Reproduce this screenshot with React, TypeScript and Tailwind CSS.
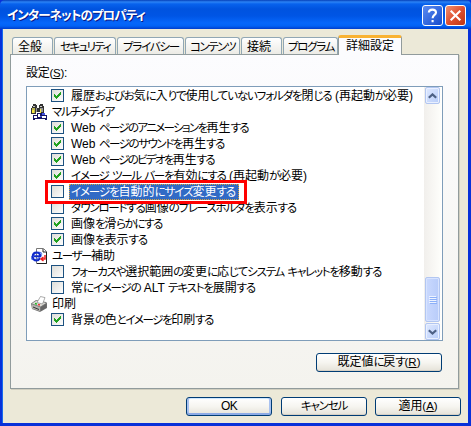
import { useLayoutEffect, useRef, type ReactNode } from "react";

const KANA = /([\u3040-\u30ff]+)/;

/** Sets text to a given width by tightening the kana only, as MS UI Gothic does. */
function Fit({ text, w, hot, kanaClass = "text-[11.5px]", className = "" }: { text: string; w: number; hot?: string; kanaClass?: string; className?: string }) {
  const ref = useRef<HTMLSpanElement>(null);
  useLayoutEffect(() => {
    const el = ref.current;
    if (!el) return;
    const kana = Array.from(el.querySelectorAll<HTMLElement>("[data-kana]"));
    const targets = kana.length ? kana : [el];
    targets.forEach((k) => (k.style.letterSpacing = "0px"));
    const count = targets.reduce((n, k) => n + (k.textContent || "").length, 0);
    const gap = (w - el.getBoundingClientRect().width) / count;
    targets.forEach((k) => (k.style.letterSpacing = gap + "px"));
  }, [text, w]);
  return (
    <span ref={ref} className={"inline-block whitespace-pre [font-feature-settings:'palt'] " + className}>
      {text.split(KANA).map((run, i) =>
        KANA.test(run) ? (
          <span key={i} data-kana="" className={kanaClass}>{run}</span>
        ) : (
          <span key={i}>{run}</span>
        ),
      )}
      {hot && <span className="text-[11.5px]">(<u className="underline-offset-1">{hot}</u>)</span>}
    </span>
  );
}

function Tab({ text, w, className }: { text: string; w: number; className: string }) {
  return (
    <div className={"h-[17px] shrink-0 rounded-t-[3px] border border-b-0 border-[#91a7b4] bg-linear-to-b from-white to-[#ecebe5] leading-[19px] " + className}>
      <Fit text={text} w={w} />
    </div>
  );
}

function Check({ on }: { on?: boolean }) {
  return (
    <svg width="13" height="13" viewBox="0 0 13 13" shapeRendering="crispEdges" className="mt-px shrink-0 self-start">
      <defs>
        <linearGradient id="boxFill" x1="0" y1="0" x2="1" y2="1">
          <stop offset="0" stopColor="#dcdcd7" />
          <stop offset="1" stopColor="#ffffff" />
        </linearGradient>
      </defs>
      <rect x=".5" y=".5" width="12" height="12" fill="url(#boxFill)" stroke="#1c5180" />
      {on && <path d="M3 5h1v1h1v1h1v-1h1v-1h1v-1h1v-1h1v3h-1v1h-1v1h-1v1h-1v1h-1v-1h-1v-1h-1z" fill="#21a121" />}
    </svg>
  );
}

function Item({ text, w, on }: { text: string; w: number; on?: boolean }) {
  return (
    <div className="flex h-4 items-center pl-6 leading-4">
      <Check on={on} />
      <Fit text={text} w={w} className="ml-[7px]" />
    </div>
  );
}

function Group({ text, w, children }: { text: string; w: number; children: ReactNode }) {
  return (
    <div className="flex h-4 items-center pl-1 leading-4">
      <svg width="16" height="16" viewBox="0 0 16 16" className="mr-[5px] shrink-0">{children}</svg>
      <Fit text={text} w={w} />
    </div>
  );
}

function Button({ text, w, hot, primary, className }: { text: string; w: number; hot?: string; primary?: boolean; className: string }) {
  return (
    <button
      className={
        "flex h-[19px] items-center justify-center rounded-[3px] border border-[#003c74] bg-linear-to-b from-white via-[#f6f5f0] to-[#e5e2d8] leading-[17px] " +
        (primary ? "shadow-[inset_0_-2px_0_#8caae6,inset_2px_0_0_#a9c2f0,inset_-2px_0_0_#a9c2f0,inset_0_1px_0_#cee7ff] " : "shadow-[inset_0_-1px_0_#d6d0c5] ") +
        className
      }
    >
      <Fit text={text} w={w} hot={hot} />
    </button>
  );
}

function ScrollArrow({ down }: { down?: boolean }) {
  return (
    <div className="flex h-[17px] w-[15px] shrink-0 items-center justify-center rounded-[2px] border border-[#b2c6f1] bg-linear-to-br from-[#dfe9ff] to-[#b8cdf9] shadow-[inset_0_0_0_1px_#e9f0ff]">
      <svg width="9" height="6" viewBox="0 0 9 6">
        <path d={down ? "M.8 1.2 4.5 4.5 8.2 1.2" : "M.8 4.8 4.5 1.4 8.2 4.8"} fill="none" stroke="#4d6185" strokeWidth="2.2" />
      </svg>
    </div>
  );
}

export default function App() {
  return (
    <div className="flex h-[426px] w-[471px] flex-col overflow-hidden bg-[#0831d9] text-[12px] text-black [font-family:'Liberation_Sans','Noto_Sans_CJK_JP',sans-serif]">
      <header className="flex h-[29px] shrink-0 items-center rounded-t-[5px] bg-[linear-gradient(#0540b8_0,#2b83f5_2px,#0762ed_4px,#0053df_9px,#0055e5_16px,#0667fb_23px,#0262f5_26px,#003dcc_29px)] pr-[5px] pl-[7px] text-white">
        <Fit text="インターネットのプロパティ" w={138} kanaClass="text-[12.5px]" className="mt-[3px] font-bold leading-[18px] [text-shadow:1px_1px_#0a1883]" />
        <div className="ml-auto flex gap-[2px] pt-[2px]">
          <div className="flex size-[21px] items-center justify-center rounded-[3px] border border-white bg-linear-to-br from-[#5b8bf2] to-[#164bcc]">
            <svg width="13" height="15" viewBox="0 0 13 15" fill="none" stroke="white" strokeWidth="2.1">
              <path d="M2.8 4.5C3 1.9 5 1.6 6.5 1.6c2.2 0 3.5 1.1 3.5 2.8 0 2.5-3.4 2.6-3.4 5.8M6.6 12v2.2" />
            </svg>
          </div>
          <div className="flex size-[21px] items-center justify-center rounded-[3px] border border-white bg-linear-to-br from-[#f0906f] via-[#df5030] to-[#bf3511]">
            <svg width="13" height="13" viewBox="0 0 13 13" stroke="white" strokeWidth="2.1">
              <path d="m1.7 1.7 9.6 9.6M11.3 1.7l-9.6 9.6" />
            </svg>
          </div>
        </div>
      </header>

      <div className="mr-[3px] mb-[3px] ml-[3px] flex h-[394px] flex-col bg-[#ece9d8] pt-[6px] shadow-[-1px_0_0_#166aee]">
        <nav className="z-10 -mb-px flex h-5 items-end pl-[9px]">
          <Tab text="全般" w={24} className="mb-px w-[41px] pl-[5px]" />
          <Tab text="セキュリティ" w={50} className="mb-px ml-px w-[62px] pl-[5px]" />
          <Tab text="プライバシー" w={56} className="mb-px ml-px w-[67px] pl-[5px]" />
          <Tab text="コンテンツ" w={45} className="mb-px ml-px w-[55px] pl-1" />
          <Tab text="接続" w={24} className="mb-px ml-px w-[41px] pl-[5px]" />
          <Tab text="プログラム" w={46} className="mb-px ml-px w-[55px] pl-1" />
          <div className="h-5 w-[64px] rounded-t-[3px] border border-t-[3px] border-b-0 border-[#919b9c] border-t-[#f9b233] bg-[#fcfcfe] pl-[7px] leading-[16px]">
            <Fit text="詳細設定" w={48} />
          </div>
        </nav>

        <main className="ml-[7px] h-[335px] w-[449px] shrink-0 border border-[#919b9c] bg-linear-to-b from-[#fcfcfe] to-[#f4f3ee] pl-[15px] shadow-[1px_1px_0_#d0cebf]">
          <div className="flex h-[31px] items-center pt-[5px] leading-4">
            <Fit text="設定" w={38} hot="S" />:
          </div>
          <div className="flex h-[255px] w-[417px] border border-[#7f9db9] bg-white">
            <div className="w-[397px] shrink-0 pt-px">
              <Item on text="履歴およびお気に入りで使用していないフォルダを閉じる (再起動が必要)" w={342} />
              <Group text="マルチメディア" w={62}>
                <g shapeRendering="crispEdges">
                  <path d="M2 0h3v1h1v3h2V1h1V0h3v2h1v8h-3V8H5v2H0V4h1V2h1z" fill="#333" />
                  <path d="M2 2h2v1H2zM9 2h2v1H9z" fill="#ccc" />
                  <path d="M1 4h3v5H1z" fill="#b9b44e" />
                  <path d="M1 6h2v3H1z" fill="#f5e741" />
                  <path d="M5 4h1v4H5zM9 4h3v4H9z" fill="#999" />
                  <path d="M9 5h1v4H9z" fill="#f5e741" />
                  <path d="M2 11h14v5H2zM6 9h8v3H6z" fill="#141464" />
                  <path d="M3 12h3v2H3zM7 10h2v3H7zM11 12h4v2h-4zM4 15h10v1H4z" fill="#fff" />
                  <path d="M9 12h2v1H9zM11 9h3v2h-3z" fill="#4354e0" />
                </g>
              </Group>
              <Item on text="Web ページのアニメーションを再生する" w={177} />
              <Item on text="Web ページのサウンドを再生する" w={153} />
              <Item on text="Web ページのビデオを再生する" w={143} />
              <Item on text="イメージ ツール バーを有効にする (再起動が必要)" w={236} />
              <div className="relative flex h-4 items-center pl-6 leading-4">
                <Check />
                <div className="ml-[5px] h-4 w-[170px] border border-dotted border-[#d9a441] bg-[#316ac5] pl-px leading-[14px] text-white">
                  <Fit text="イメージを自動的にサイズ変更する" w={164} />
                </div>
                <div className="absolute -top-1 left-[18px] z-10 h-6 w-[202px] border-[3px] border-[#ff0000]" />
              </div>
              <Item text="ダウンロードする画像のプレースホルダを表示する" w={225} />
              <Item on text="画像を滑らかにする" w={91} />
              <Item on text="画像を表示する" w={76} />
              <Group text="ユーザー補助" w={63}>
                <path d="M5.5.5h7l3 3v12h-10z" fill="#fff" stroke="#777" />
                <path d="M12 1v3h3.5M6 15.5h9.5V4" fill="none" stroke="#222" />
                <ellipse cx="5.5" cy="8" rx="5.7" ry="2.7" transform="rotate(-28 5.5 8)" fill="none" stroke="#5278e8" strokeWidth=".9" />
                <path d="M9 10.3C8 12 6.9 12.5 5.5 12.5 3 12.5 1.8 10.7 1.8 8.4S3.4 4.5 5.6 4.5c2.4 0 3.6 1.6 3.6 3.8H3" fill="none" stroke="#102aca" strokeWidth="2" />
                <path d="M14 7v4h-3m1.5-2L10 11l2.5 2" fill="none" stroke="#ef1c1c" strokeWidth="1.5" />
              </Group>
              <Item text="フォーカスや選択範囲の変更に応じてシステム キャレットを移動する" w={310} />
              <Item text="常にイメージの ALT テキストを展開する" w={184} />
              <Group text="印刷" w={24}>
                <path d="M0 7.5 5 4l10 2 1 1v5l-7 4-8-3z" fill="#777" />
                <path d="m1 7.6 4.5-2.8L15 7l-5.5 3.4z" fill="#deded8" />
                <path d="M6 6.5 9.5.5 14 1.6 11.5 8z" fill="#fff" stroke="#888" strokeWidth=".7" />
                <path d="m1 8.3 8 3V15l-8-2.6z" fill="#b5b5b0" />
                <path d="m10 11.2 5.5-3.6v4L10 15z" fill="#666" />
                <path d="m2 11 6 2.5" stroke="#333" />
                <path d="m4 7.5 2 .6" stroke="#1ab51a" strokeWidth="1.4" />
                <path d="m7 8.5 2 .5" stroke="#e33" strokeWidth="1.4" />
              </Group>
              <Item on text="背景の色とイメージを印刷する" w={142} />
            </div>
            <div className="flex w-[17px] flex-col items-center bg-linear-to-r from-[#f1efec] to-[#fefefb]">
              <ScrollArrow />
              <div className="mt-auto mb-px flex h-[45px] w-[15px] flex-col items-center justify-center gap-px rounded-[2px] border border-[#b2c6f1] bg-linear-to-r from-[#cad9fe] to-[#b8ccfa] shadow-[inset_0_0_0_1px_#d7e3ff]">
                {[0, 1, 2, 3].map((n) => (
                  <i key={n} className="h-px w-[7px] bg-[#edf3ff] shadow-[1px_1px_0_#8cb0f8]" />
                ))}
              </div>
              <ScrollArrow down />
            </div>
          </div>
          <Button text="既定値に戻す" w={83} hot="R" className="mt-3 ml-[290px] w-[126px]" />
        </main>

        <footer className="mt-[8px] flex h-[19px] gap-2 pl-[183px]">
          <Button text="OK" w={16} primary className="w-[86px]" />
          <Button text="キャンセル" w={46} className="ml-px w-[86px]" />
          <Button text="適用" w={39} hot="A" className="w-[86px]" />
        </footer>
      </div>
    </div>
  );
}
